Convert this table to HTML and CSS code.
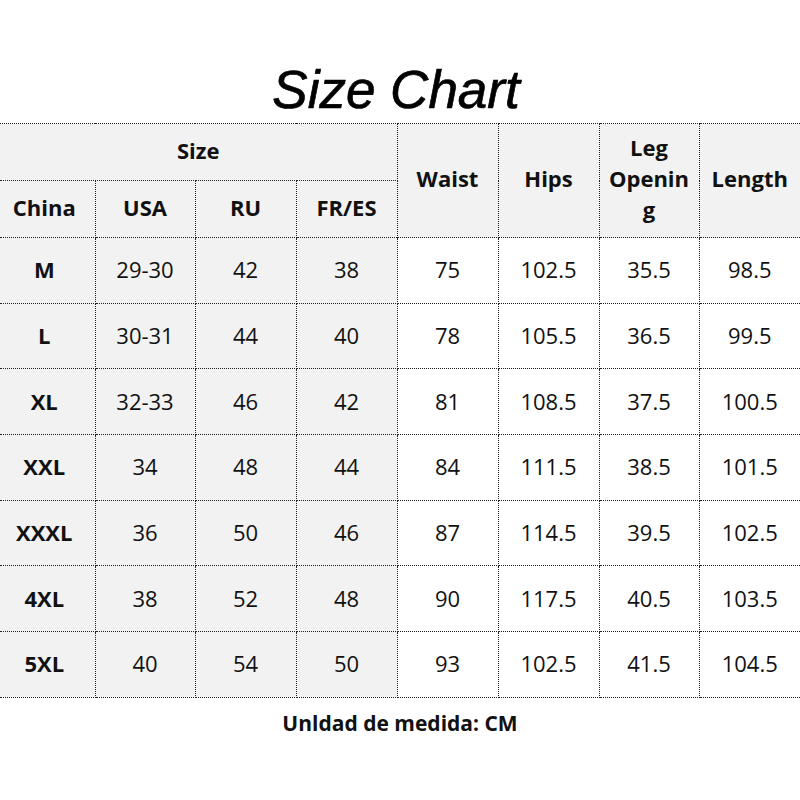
FILE: index.html
```html
<!DOCTYPE html>
<html lang="en">
<head>
<meta charset="utf-8">
<title>Size Chart</title>
<link rel="stylesheet" href="styles.css">
</head>
<body>
<div class="page">
  <h1 class="title">Size Chart</h1>
  <table class="chart">
    <colgroup>
      <col class="c1"><col class="c2"><col class="c3"><col class="c4">
      <col class="c5"><col class="c6"><col class="c7"><col class="c8">
    </colgroup>
    <thead>
      <tr class="hrow">
        <th colspan="4" class="gray">Size</th>
        <th rowspan="2" class="gray">Waist</th>
        <th rowspan="2" class="gray">Hips</th>
        <th rowspan="2" class="gray wrap">Leg Opening</th>
        <th rowspan="2" class="gray">Length</th>
      </tr>
      <tr class="hrow">
        <th class="gray first">China</th>
        <th class="gray">USA</th>
        <th class="gray">RU</th>
        <th class="gray">FR/ES</th>
      </tr>
    </thead>
    <tbody>
      <tr class="drow"><td class="gray b first">M</td><td class="gray">29-30</td><td class="gray">42</td><td class="gray">38</td><td>75</td><td>102.5</td><td>35.5</td><td>98.5</td></tr>
      <tr class="drow"><td class="gray b first">L</td><td class="gray">30-31</td><td class="gray">44</td><td class="gray">40</td><td>78</td><td>105.5</td><td>36.5</td><td>99.5</td></tr>
      <tr class="drow"><td class="gray b first">XL</td><td class="gray">32-33</td><td class="gray">46</td><td class="gray">42</td><td>81</td><td>108.5</td><td>37.5</td><td>100.5</td></tr>
      <tr class="drow"><td class="gray b first">XXL</td><td class="gray">34</td><td class="gray">48</td><td class="gray">44</td><td>84</td><td>111.5</td><td>38.5</td><td>101.5</td></tr>
      <tr class="drow"><td class="gray b first">XXXL</td><td class="gray">36</td><td class="gray">50</td><td class="gray">46</td><td>87</td><td>114.5</td><td>39.5</td><td>102.5</td></tr>
      <tr class="drow"><td class="gray b first">4XL</td><td class="gray">38</td><td class="gray">52</td><td class="gray">48</td><td>90</td><td>117.5</td><td>40.5</td><td>103.5</td></tr>
      <tr class="drow"><td class="gray b first">5XL</td><td class="gray">40</td><td class="gray">54</td><td class="gray">50</td><td>93</td><td>102.5</td><td>41.5</td><td>104.5</td></tr>
    </tbody>
  </table>
  <p class="note">Unldad de medida: CM</p>
</div>
</body>
</html>
```

FILE: styles.css
```css
html, body {
  margin: 0;
  padding: 0;
  background: #ffffff;
}

.page {
  width: 800px;
  height: 800px;
  font-family: "Open Sans", "Noto Sans", "DejaVu Sans", sans-serif;
  color: #111111;
}

.title {
  margin: 0;
  height: 123px;
  box-sizing: border-box;
  padding: 59px 8px 0 0;
  font-family: "Liberation Sans", Arial, sans-serif;
  font-style: italic;
  font-weight: normal;
  font-size: 53px;
  line-height: 61px;
  text-align: center;
  color: #000000;
  -webkit-text-stroke: 0.7px #000000;
}

.chart {
  width: 800px;
  table-layout: fixed;
  border-collapse: collapse;
  border-top: 1px dotted #222;
}

.c1 { width: 95px; }
.c2 { width: 100px; }
.c3 { width: 101px; }
.c4 { width: 101px; }
.c5 { width: 101px; }
.c6 { width: 101px; }
.c7 { width: 100px; }
.c8 { width: 101px; }

.chart th,
.chart td {
  border: 1px dotted #222;
  padding: 0 5px;
  text-align: center;
  vertical-align: middle;
  font-size: 22px;
  line-height: 31px;
}

.chart th { padding-bottom: 4px; }
.chart td { padding-bottom: 1px; }

.chart .first { padding-left: 0; padding-right: 6px; }

.chart tr > :first-child { border-left: none; }
.chart tr > :last-child { border-right: none; }
.chart thead tr:nth-child(2) > :last-child { border-right: 1px dotted #222; }

.chart th { font-weight: 700; }

.hrow { height: 57px; }
.drow { height: 65.7px; }

.gray { background: #f2f2f2; }
.b { font-weight: 700; }

.wrap { overflow-wrap: anywhere; }

.note {
  margin: 10px 0 0;
  text-align: center;
  font-size: 21px;
  line-height: 30px;
  font-weight: 700;
  color: #111111;
}
```
